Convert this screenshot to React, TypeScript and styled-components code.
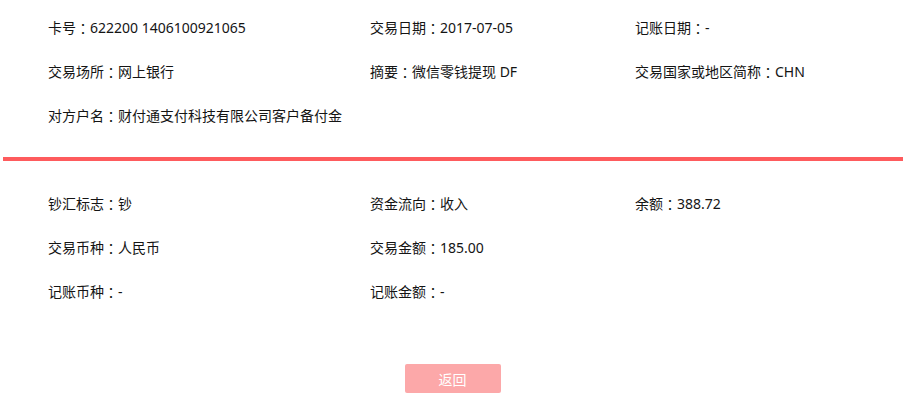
import React from "react";
import styled, { createGlobalStyle } from "styled-components";

const GlobalStyle = createGlobalStyle`
  html, body {
    margin: 0;
    padding: 0;
    background: #fff;
  }
  body {
    font-family: "Noto Sans", "Noto Sans CJK SC", sans-serif;
    font-size: 14px;
    color: #141414;
  }
`;

const Page = styled.div`
  width: 900px;
  padding: 6px 10px 0 3px;
  display: flex;
  flex-direction: column;
`;

const Section = styled.div`
  display: grid;
  grid-template-columns: 322px 265px 1fr;
  grid-auto-rows: 44px;
  padding-left: 45px;
`;

const Field = styled.div`
  display: flex;
  align-items: center;
  white-space: nowrap;
  line-height: 20px;
`;

/* full-width colon, centred in its cell */
const Colon = styled.span`
  font-family: "Noto Sans CJK TC", "Noto Sans CJK SC", sans-serif;
`;

const Divider = styled.div`
  height: 4px;
  background: #fe5b5d;
  margin: 19px 0 21px;
`;

const Footer = styled.div`
  display: flex;
  justify-content: center;
  padding-top: 50px;
`;

const BackButton = styled.button`
  width: 96px;
  height: 29px;
  border: none;
  border-radius: 2px;
  background: #fca8a9;
  color: #fff;
  font-family: inherit;
  font-size: 14px;
  cursor: pointer;
  margin-left: -1px;
`;

type Item = { label: string; value: string };

const accountInfo: (Item | null)[] = [
  { label: "卡号", value: "622200 1406100921065" },
  { label: "交易日期", value: "2017-07-05" },
  { label: "记账日期", value: "-" },
  { label: "交易场所", value: "网上银行" },
  { label: "摘要", value: "微信零钱提现 DF" },
  { label: "交易国家或地区简称", value: "CHN" },
  { label: "对方户名", value: "财付通支付科技有限公司客户备付金" },
];

const amountInfo: (Item | null)[] = [
  { label: "钞汇标志", value: "钞" },
  { label: "资金流向", value: "收入" },
  { label: "余额", value: "388.72" },
  { label: "交易币种", value: "人民币" },
  { label: "交易金额", value: "185.00" },
  null,
  { label: "记账币种", value: "-" },
  { label: "记账金额", value: "-" },
];

const Fields = ({ items }: { items: (Item | null)[] }) => (
  <Section>
    {items.map((it, i) =>
      it ? (
        <Field key={i}>
          {it.label}
          <Colon>：</Colon>
          {it.value}
        </Field>
      ) : (
        <Field key={i} />
      )
    )}
  </Section>
);

export default function App() {
  return (
    <>
      <GlobalStyle />
      <Page>
        <Fields items={accountInfo} />
        <Divider />
        <Fields items={amountInfo} />
        <Footer>
          <BackButton>返回</BackButton>
        </Footer>
      </Page>
    </>
  );
}
